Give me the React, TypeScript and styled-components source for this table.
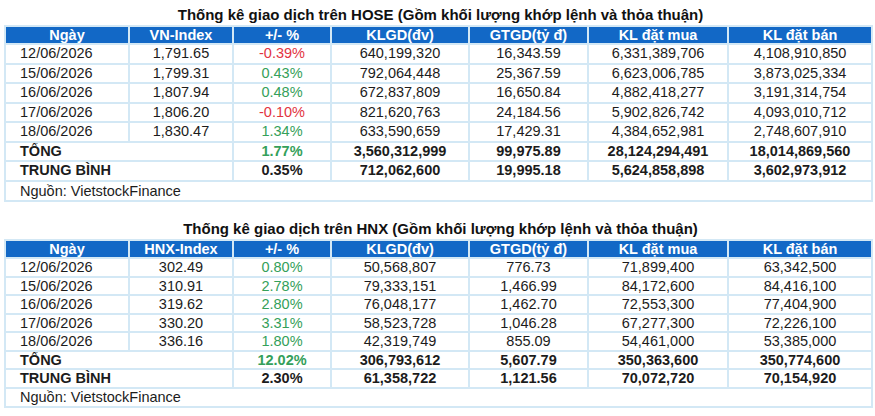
import React from "react";
import styled, { createGlobalStyle } from "styled-components";

const Global = createGlobalStyle`
  html, body { margin: 0; padding: 0; background: #ffffff; }
  body { font-family: "Liberation Sans", Arial, sans-serif; }
`;

const Page = styled.div`
  width: 875px;
  padding: 6px 0 0 4px;
  box-sizing: border-box;
  display: flex;
  flex-direction: column;
  gap: 18px;
`;

const Section = styled.section`
  display: flex;
  flex-direction: column;
  align-items: stretch;
  width: 867px;
`;

const Title = styled.div`
  font-size: 15px;
  font-weight: bold;
  color: #111;
  text-align: center;
  line-height: 18px;
  height: 19px;
  padding-left: 6px;
`;

const Table = styled.table`
  width: 867px;
  border-collapse: collapse;
  table-layout: fixed;
  border: 2px solid #d3e8f5;
  font-size: 14.5px;
  color: #1c1c1c;
`;

const HeadCell = styled.th`
  background: #1268c6;
  color: #ffffff;
  font-weight: bold;
  height: 16px;
  padding: 0;
  line-height: 16px;
  text-align: center;
  border: 2px solid #d3e8f5;
  white-space: nowrap;
`;

const Cell = styled.td<{ $h: number; $align?: string; $bold?: boolean; $tone?: "up" | "down" }>`
  height: ${(p) => p.$h}px;
  padding: 0 0 0 ${(p) => (p.$align === "left" ? "14px" : "0")};
  line-height: ${(p) => p.$h}px;
  text-align: ${(p) => p.$align || "center"};
  font-weight: ${(p) => (p.$bold ? "bold" : "normal")};
  color: ${(p) => (p.$tone === "up" ? "#34a05a" : p.$tone === "down" ? "#e2343f" : "#1c1c1c")};
  border: 2px solid #d3e8f5;
  white-space: nowrap;
  overflow: hidden;
`;

const widths = [124, 104, 98, 138, 119, 140, 144];

type Row = [string, string, string, string, string, string, string];
type Data = {
  title: string;
  index: string;
  rows: Row[];
  total: [string, string, string, string, string];
  avg: [string, string, string, string, string];
  rowH: number;
};

const hose: Data = {
  title: "Thống kê giao dịch trên HOSE (Gồm khối lượng khớp lệnh và thỏa thuận)",
  index: "VN-Index",
  rowH: 17.5,
  rows: [
    ["12/06/2026", "1,791.65", "-0.39%", "640,199,320", "16,343.59", "6,331,389,706", "4,108,910,850"],
    ["15/06/2026", "1,799.31", "0.43%", "792,064,448", "25,367.59", "6,623,006,785", "3,873,025,334"],
    ["16/06/2026", "1,807.94", "0.48%", "672,837,809", "16,650.84", "4,882,418,277", "3,191,314,754"],
    ["17/06/2026", "1,806.20", "-0.10%", "821,620,763", "24,184.56", "5,902,826,742", "4,093,010,712"],
    ["18/06/2026", "1,830.47", "1.34%", "633,590,659", "17,429.31", "4,384,652,981", "2,748,607,910"],
  ],
  total: ["1.77%", "3,560,312,999", "99,975.89", "28,124,294,491", "18,014,869,560"],
  avg: ["0.35%", "712,062,600", "19,995.18", "5,624,858,898", "3,602,973,912"],
};

const hnx: Data = {
  title: "Thống kê giao dịch trên HNX (Gồm khối lượng khớp lệnh và thỏa thuận)",
  index: "HNX-Index",
  rowH: 16.5,
  rows: [
    ["12/06/2026", "302.49", "0.80%", "50,568,807", "776.73", "71,899,400", "63,342,500"],
    ["15/06/2026", "310.91", "2.78%", "79,333,151", "1,466.99", "84,172,600", "84,416,100"],
    ["16/06/2026", "319.62", "2.80%", "76,048,177", "1,462.70", "72,553,300", "77,404,900"],
    ["17/06/2026", "330.20", "3.31%", "58,523,728", "1,046.28", "67,277,300", "72,226,100"],
    ["18/06/2026", "336.16", "1.80%", "42,319,749", "855.09", "54,461,000", "53,385,000"],
  ],
  total: ["12.02%", "306,793,612", "5,607.79", "350,363,600", "350,774,600"],
  avg: ["2.30%", "61,358,722", "1,121.56", "70,072,720", "70,154,920"],
};

const tone = (v: string): "up" | "down" => (v.startsWith("-") ? "down" : "up");

function StatTable({ d }: { d: Data }) {
  const heads = ["Ngày", d.index, "+/- %", "KLGD(đv)", "GTGD(tỷ đ)", "KL đặt mua", "KL đặt bán"];
  return (
    <Section>
      <Title>{d.title}</Title>
      <Table>
        <colgroup>
          {widths.map((w, i) => (
            <col key={i} style={{ width: w }} />
          ))}
        </colgroup>
        <thead>
          <tr>
            {heads.map((h) => (
              <HeadCell key={h}>{h}</HeadCell>
            ))}
          </tr>
        </thead>
        <tbody>
          {d.rows.map((r) => (
            <tr key={r[0]}>
              <Cell $h={d.rowH} $align="left">{r[0]}</Cell>
              <Cell $h={d.rowH}>{r[1]}</Cell>
              <Cell $h={d.rowH} $tone={tone(r[2])}>{r[2]}</Cell>
              {r.slice(3).map((v, i) => (
                <Cell key={i} $h={d.rowH}>{v}</Cell>
              ))}
            </tr>
          ))}
          <tr>
            <Cell $h={d.rowH} $align="left" $bold colSpan={2}>TỔNG</Cell>
            <Cell $h={d.rowH} $bold $tone="up">{d.total[0]}</Cell>
            {d.total.slice(1).map((v, i) => (
              <Cell key={i} $h={d.rowH} $bold>{v}</Cell>
            ))}
          </tr>
          <tr>
            <Cell $h={d.rowH} $align="left" $bold colSpan={2}>TRUNG BÌNH</Cell>
            {d.avg.map((v, i) => (
              <Cell key={i} $h={d.rowH} $bold>{v}</Cell>
            ))}
          </tr>
          <tr>
            <Cell $h={d.rowH + 1} $align="left" colSpan={7}>Nguồn: VietstockFinance</Cell>
          </tr>
        </tbody>
      </Table>
    </Section>
  );
}

export default function App() {
  return (
    <>
      <Global />
      <Page>
        <StatTable d={hose} />
        <StatTable d={hnx} />
      </Page>
    </>
  );
}
